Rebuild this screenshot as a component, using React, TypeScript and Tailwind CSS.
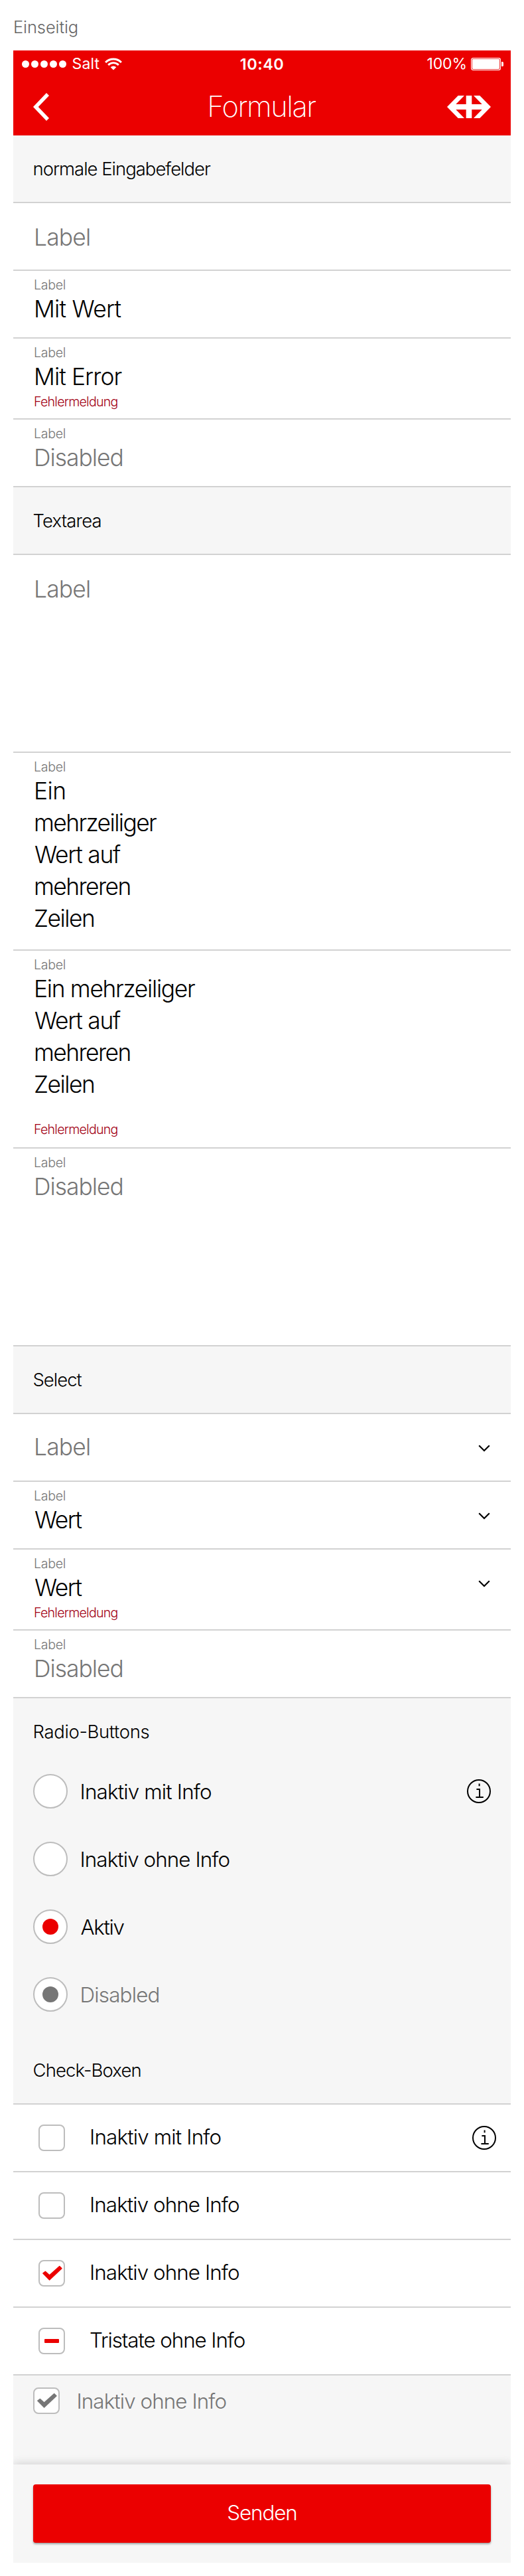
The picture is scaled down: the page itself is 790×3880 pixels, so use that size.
import type { ReactNode } from "react";
import clsx from "clsx";

function StatusBar() {
  return (
    <div className="grid h-10 grid-cols-[1fr_auto_1fr] items-center">
      <div className="flex items-center pl-[12.6px]">
        <div className="mt-px flex gap-[2.6px]">
          {[0, 1, 2, 3, 4].map((n) => (
            <span key={n} className="size-[11.4px] rounded-full bg-white" />
          ))}
        </div>
        <span className="ml-[8.5px] text-[23px] leading-10 tracking-[0.2px]">Salt</span>
        <svg className="ml-[7.5px] h-[19px] w-[26px]" viewBox="0 0 26 19" fill="none" stroke="white">
          <path d="M1.1 7A16.6 16.6 0 0 1 24.9 7" strokeWidth="3.1" />
          <path d="M5.2 11A10.8 10.8 0 0 1 20.8 11" strokeWidth="2.9" />
          <path d="M13 18.5L8.7 14.3A6 6 0 0 1 17.3 14.3Z" fill="white" stroke="none" />
        </svg>
      </div>
      <span className="pt-[2px] text-[23.5px] leading-[38px] font-semibold tracking-[0.5px]">10:40</span>
      <div className="flex items-center justify-end pr-[11px]">
        <span className="text-[23px] leading-10 tracking-[-0.1px]">100%</span>
        <svg className="ml-[6px] h-[19px] w-[49px]" viewBox="0 0 49 19" fill="none">
          <rect x="0.6" y="0.6" width="43.8" height="17.8" rx="2.6" stroke="white" strokeWidth="1.2" />
          <rect x="2" y="2" width="41" height="15" rx="1.4" fill="white" />
          <path d="M46 6h1.4q1.6 0 1.6 1.6v3.8q0 1.6 -1.6 1.6H46z" fill="white" />
        </svg>
      </div>
    </div>
  );
}

function NavBar() {
  return (
    <div className="grid h-[88px] grid-cols-[1fr_auto_1fr] items-center px-[30px]">
      <svg className="mt-[2px] h-[42px] w-6" viewBox="0 0 24 42" fill="none">
        <path d="M22 2L3.8 21L22 40" stroke="white" strokeWidth="5.6" />
      </svg>
      <h1 className="pr-[2px] text-[43.4px] leading-[88px] font-extralight tracking-[-1.5px]">Formular</h1>
      <svg className="mt-[2px] h-[34px] w-[66px] justify-self-end" viewBox="0 0 66 34" fill="white">
        <path d="M0 17L16.7 0H26L13.3 13H28.7V0H37.3V13H52.7L40 0H49.3L66 17L49.3 34H40L52.7 21H37.3V34H28.7V21H13.3L26 34H16.7Z" />
      </svg>
    </div>
  );
}

function SectionHeader({ title, tracking, line = true }: { title: string; tracking: string; line?: boolean }) {
  return (
    <h2
      className={clsx(
        "bg-[#f6f6f6] pl-[29.5px] text-[27.5px] leading-[100px]",
        line && "border-b-2 border-[#d2d2d2]",
        tracking,
      )}
    >
      {title}
    </h2>
  );
}

function EmptyField({ height, children }: { height: string; children?: ReactNode }) {
  return (
    <div className={clsx("flex items-start justify-between border-b-2 border-[#d2d2d2] pr-[31px] pl-[31px]", height)}>
      {children}
    </div>
  );
}

type FieldProps = {
  lines: { text: string; tracking: string }[];
  height: string;
  disabled?: boolean;
  error?: string;
  select?: boolean;
};

function ChevronDown() {
  return (
    <svg className="mt-[46px] h-[11px] w-[18px]" viewBox="0 0 18 11" fill="none">
      <path d="M1.2 1.2L9 9L16.8 1.2" stroke="black" strokeWidth="2.2" />
    </svg>
  );
}

function Field({ lines, height, disabled, error, select }: FieldProps) {
  return (
    <div className={clsx("flex items-start justify-between border-b-2 border-[#d2d2d2] pr-[31px] pl-[31px]", height)}>
      <div className="pt-[9px]">
        <div className="text-[19.6px] leading-6 tracking-[-0.3px] text-[#767676]">Label</div>
        <div className={clsx("pt-px text-[35.4px] leading-[48px]", disabled && "text-[#767676]")}>
          {lines.map((l) => (
            <div key={l.text} className={clsx("whitespace-nowrap", l.tracking)}>
              {l.text}
            </div>
          ))}
        </div>
        {error && (
          <div className={clsx("text-[19.6px] leading-6 tracking-[-0.77px] text-[#a20013]", error)}>Fehlermeldung</div>
        )}
      </div>
      {select && <ChevronDown />}
    </div>
  );
}

function InfoIcon() {
  return (
    <svg className="size-9" viewBox="0 0 36 36" fill="none" stroke="black" strokeWidth="2">
      <circle cx="18" cy="18" r="17" />
      <path d="M18.6 6.4V10.2M14.4 15H19V27M13.4 27H24.8" />
    </svg>
  );
}

function Radio({ label, tracking, dot, muted, info }: { label: string; tracking: string; dot?: string; muted?: boolean; info?: boolean }) {
  return (
    <div className="flex h-[52px] items-center">
      <span className="flex size-[52px] items-center justify-center rounded-full border-2 border-[#bdbdbd] bg-white">
        {dot && <span className={clsx("size-6 rounded-full", dot)} />}
      </span>
      <span className={clsx("ml-[18.5px] flex-1 pt-[2px] text-[31.4px] leading-[52px]", tracking, muted && "text-[#767676]")}>{label}</span>
      {info && <InfoIcon />}
    </div>
  );
}

function CheckBox({ mark }: { mark?: "check" | "minus" | "muted" }) {
  return (
    <span className="flex size-10 items-center justify-center rounded-[8px] border-2 border-[#bdbdbd] bg-white">
      {mark === "minus" && <span className="h-[6px] w-[22px] rounded-[1px] bg-[#eb0000]" />}
      {(mark === "check" || mark === "muted") && (
        <svg className="size-9" viewBox="2 2 36 36">
          <path
            d="M6.8 20L10.5 17.4L16.6 23L31.7 9.4L35 12.7L16.6 30Z"
            className={mark === "check" ? "fill-[#eb0000] stroke-[#eb0000]" : "fill-[#767676] stroke-[#767676]"}
            strokeWidth="1.4"
            strokeLinejoin="round"
          />
        </svg>
      )}
    </span>
  );
}

function CheckRow({ label, tracking, mark, info }: { label: string; tracking: string; mark?: "check" | "minus"; info?: boolean }) {
  return (
    <div className="flex h-[102px] items-center border-b-2 border-[#d2d2d2] pr-[22px] pl-[38px]">
      <CheckBox mark={mark} />
      <span className={clsx("ml-[37px] flex-1 pb-[2px] text-[31.4px] leading-[52px]", tracking)}>{label}</span>
      {info && <InfoIcon />}
    </div>
  );
}

export default function App() {
  return (
    <div className="h-[3880px] bg-white px-5 font-['Inter',sans-serif] font-light text-black">
      <div className="h-[76px] pt-[21px] text-[25.5px] leading-10 tracking-[-0.1px] text-[#666666]">Einseitig</div>
      <header className="bg-[#eb0000] font-normal text-white">
        <StatusBar />
        <NavBar />
      </header>

      <SectionHeader title="normale Eingabefelder" tracking="tracking-[-1.01px]" />
      <EmptyField height="h-[102px]">
        <span className="pt-[3px] text-[35.4px] leading-[98px] tracking-[-0.8px] text-[#767676]">Label</span>
      </EmptyField>
      <Field height="h-[102px]" lines={[{ text: "Mit Wert", tracking: "tracking-[-0.76px]" }]} />
      <Field height="h-[122px]" lines={[{ text: "Mit Error", tracking: "tracking-[-0.92px]" }]} error="mt-px" />
      <Field height="h-[102px]" lines={[{ text: "Disabled", tracking: "tracking-[-1px]" }]} disabled />

      <SectionHeader title="Textarea" tracking="tracking-[-0.83px]" />
      <EmptyField height="h-[298px]">
        <span className="pt-[3px] text-[35.4px] leading-[98px] tracking-[-0.8px] text-[#767676]">Label</span>
      </EmptyField>
      <Field
        height="h-[298px]"
        lines={[
          { text: "Ein", tracking: "tracking-[-0.5px]" },
          { text: "mehrzeiliger", tracking: "tracking-[-1.61px]" },
          { text: "Wert auf", tracking: "pl-px tracking-[-1.28px]" },
          { text: "mehreren", tracking: "tracking-[-1.57px]" },
          { text: "Zeilen", tracking: "tracking-[-1.51px]" },
        ]}
      />
      <Field
        height="h-[298px]"
        lines={[
          { text: "Ein mehrzeiliger", tracking: "tracking-[-1.32px]" },
          { text: "Wert auf", tracking: "pl-px tracking-[-1.28px]" },
          { text: "mehreren", tracking: "tracking-[-1.57px]" },
          { text: "Zeilen", tracking: "tracking-[-1.51px]" },
        ]}
        error="mt-[31px]"
      />
      <Field height="h-[298px]" lines={[{ text: "Disabled", tracking: "tracking-[-1px]" }]} disabled />

      <SectionHeader title="Select" tracking="tracking-[-1.01px]" />
      <EmptyField height="h-[102px]">
        <span className="pt-px text-[35.4px] leading-[98px] tracking-[-0.8px] text-[#767676]">Label</span>
        <ChevronDown />
      </EmptyField>
      <Field height="h-[102px]" lines={[{ text: "Wert", tracking: "pl-px tracking-[-1.56px]" }]} select />
      <Field height="h-[122px]" lines={[{ text: "Wert", tracking: "pl-px tracking-[-1.56px]" }]} error="mt-px" select />
      <Field height="h-[102px]" lines={[{ text: "Disabled", tracking: "tracking-[-1px]" }]} disabled />

      <SectionHeader title="Radio-Buttons" tracking="tracking-[-0.35px]" line={false} />
      <div className="flex h-[410px] flex-col gap-[50px] bg-[#f6f6f6] px-[30px] pt-[14px]">
        <Radio label="Inaktiv mit Info" tracking="tracking-[-0.84px]" info />
        <Radio label="Inaktiv ohne Info" tracking="tracking-[-0.93px]" />
        <Radio label="Aktiv" tracking="pl-px tracking-[-1.35px]" dot="bg-[#eb0000]" />
        <Radio label="Disabled" tracking="tracking-[-0.82px]" dot="bg-[#767676]" muted />
      </div>

      <SectionHeader title="Check-Boxen" tracking="tracking-[-0.87px]" />
      <CheckRow label="Inaktiv mit Info" tracking="tracking-[-0.84px]" info />
      <CheckRow label="Inaktiv ohne Info" tracking="tracking-[-0.93px]" />
      <CheckRow label="Inaktiv ohne Info" tracking="tracking-[-0.93px]" mark="check" />
      <CheckRow label="Tristate ohne Info" tracking="tracking-[-1.11px]" mark="minus" />
      <div className="flex h-[134px] items-start overflow-hidden bg-[#f6f6f6] pt-[18px] pl-[30px]">
        <CheckBox mark="muted" />
        <span className="ml-[25.5px] pt-px text-[31.4px] leading-[41px] tracking-[-0.93px] text-[#767676]">Inaktiv ohne Info</span>
      </div>

      <footer className="h-[148px] bg-[#f6f6f6] px-[30px] pt-[30px] shadow-[0_-2px_12px_rgba(0,0,0,0.14)] [clip-path:inset(-20px_0_0_0)]">
        <button className="block h-[88px] w-full rounded-[4px] bg-[#eb0000] pb-[2px] text-center text-[31.4px] leading-[86px] font-light tracking-[-1.12px] text-white shadow-[0_2px_3px_rgba(0,0,0,0.35)]">
          Senden
        </button>
      </footer>
    </div>
  );
}
